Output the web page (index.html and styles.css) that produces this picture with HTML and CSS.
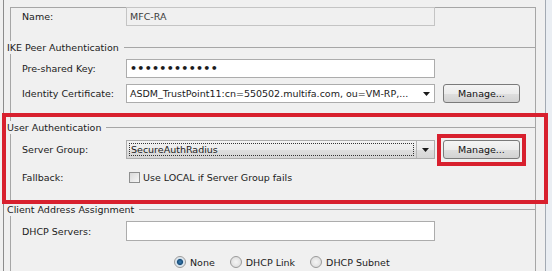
FILE: index.html
```html
<!DOCTYPE html>
<html>
<head>
<meta charset="utf-8">
<link rel="stylesheet" href="styles.css">
</head>
<body>
<div class="screen">
  <div class="main">
    <div class="panel">
      <div class="body body-name">
        <div class="row">
          <span class="label">Name:</span>
          <div class="field field-disabled">MFC-RA</div>
        </div>
      </div>

      <div class="head"><span class="head-text">IKE Peer Authentication</span><span class="head-line"></span></div>
      <div class="body body-ike">
        <div class="row">
          <span class="label">Pre-shared Key:</span>
          <div class="field"><span class="dots">••••••••••••</span></div>
        </div>
        <div class="row">
          <span class="label">Identity Certificate:</span>
          <div class="combo">
            <span class="combo-text">ASDM_TrustPoint11:cn=550502.multifa.com, ou=VM-RP,...</span>
            <span class="combo-arrow"><svg width="7" height="4" viewBox="0 0 7 4"><path d="M0 0H7L3.5 4Z" fill="#1a1a1a"/></svg></span>
          </div>
          <button class="btn">Manage...</button>
        </div>
      </div>

      <div class="head"><span class="head-text">User Authentication</span><span class="head-line"></span></div>
      <div class="body body-user">
        <div class="row">
          <span class="label">Server Group:</span>
          <div class="combo combo-ro">
            <span class="combo-text"><span class="focus">SecureAuthRadius</span></span>
            <span class="combo-arrow"><svg width="7" height="4" viewBox="0 0 7 4"><path d="M0 0H7L3.5 4Z" fill="#1a1a1a"/></svg></span>
          </div>
          <button class="btn">Manage...</button>
        </div>
        <div class="row row-check">
          <span class="label">Fallback:</span>
          <span class="check"></span>
          <span>Use LOCAL if Server Group fails</span>
        </div>
      </div>

      <div class="head"><span class="head-text">Client Address Assignment</span><span class="head-line"></span></div>
      <div class="body body-client">
        <div class="row row-tall">
          <span class="label">DHCP Servers:</span>
          <div class="field field-tall"></div>
        </div>
        <div class="row row-radio">
          <span class="radio radio-on"></span><span class="radio-label">None</span>
          <span class="radio"></span><span class="radio-label">DHCP Link</span>
          <span class="radio"></span><span class="radio-label">DHCP Subnet</span>
        </div>
      </div>
    </div>
  </div>
  <div class="scroll"></div>
  <div class="mark mark-big"></div>
  <div class="mark mark-btn"></div>
</div>
</body>
</html>
```

FILE: styles.css
```css
* { box-sizing: border-box; }
html, body { margin: 0; padding: 0; }
body {
  background: #f0f0f0;
  font-family: "DejaVu Sans", sans-serif;
  font-size: 9.5px;
  color: #1b1b1b;
}
.screen {
  width: 552px;
  height: 271px;
  overflow: hidden;
  display: flex;
  position: relative;
  padding-left: 3px;
}
.main {
  flex: 0 0 542px;
  border-left: 1px solid #8c8c8c;
}
.scroll {
  flex: 1;
  border-left: 1px solid #a3aab3;
  background: #eaeef3;
}
.panel {
  margin: 7px 0 0 6px;
  width: 526px;
  height: 270px;
  border-top: 1px solid #a6a6a6;
  border-right: 1px solid #a6a6a6;
}
.body {
  display: flex;
  flex-direction: column;
  border-left: 1px solid #a6a6a6;
  padding-left: 11px;
}
.body-name { margin-top: -1px; padding-bottom: 15px; }
.body-ike { padding-top: 5px; padding-bottom: 18px; gap: 6px; }
.body-user { padding-top: 6px; padding-bottom: 19px; gap: 12px; }
.body-client { padding-top: 5px; gap: 14px; height: 60px; }

.head {
  display: flex;
  align-items: center;
  height: 13px;
  margin-left: -3px;
}
.head-text { padding-right: 5px; white-space: nowrap; }
.head-line { flex: 1; border-top: 1px solid #a6a6a6; }

.row { display: flex; align-items: center; height: 19px; }
.row-tall { height: 20px; }
.row-check { height: 13px; }
.row-radio { height: 14px; padding-left: 152px; }
.label { width: 104px; flex: none; white-space: nowrap; }

.field {
  width: 309px;
  height: 19px;
  border: 1px solid #acacac;
  background: #fff;
  padding-left: 3px;
  display: flex;
  align-items: center;
}
.field-tall { height: 20px; }
.field-disabled { background: #f0f0f0; border-color: #c4c4c4; color: #3c3c3c; }
.dots { font-size: 11px; font-weight: bold; letter-spacing: 0.3px; }

.combo {
  width: 309px;
  height: 19px;
  border: 1px solid #acacac;
  background: #fff;
  display: flex;
}
.combo-text {
  flex: 1;
  padding-left: 3px;
  display: flex;
  align-items: center;
  white-space: nowrap;
  overflow: hidden;
}
.combo-arrow {
  width: 15px;
  display: flex;
  align-items: center;
  justify-content: center;
}
.combo-ro { background: linear-gradient(#f2f2f2, #ebebeb 50%, #dedede 51%, #d6d6d6); }
.combo-ro .combo-text { padding: 2px 2px 2px 2px; border-right: 1px solid #b5b5b5; }
.combo-ro .combo-arrow { width: 17px; }
.focus {
  flex: 1;
  height: 100%;
  border: 1px dotted #333;
  display: flex;
  align-items: center;
  padding-left: 1px;
}

.btn {
  margin-left: 8px;
  width: 77px;
  height: 19px;
  padding: 0;
  border: 1px solid #7a7a7a;
  border-radius: 3px;
  background: linear-gradient(#f4f4f4, #ececec 50%, #dfdfdf 51%, #d2d2d2);
  font: inherit;
  color: #111;
}

.check {
  width: 11px;
  height: 11px;
  margin-left: 3px;
  margin-right: 3px;
  border: 1px solid #8e8f8f;
  background: linear-gradient(135deg, #d9d9d9, #f7f7f7);
}

.radio {
  width: 12px;
  height: 12px;
  flex: none;
  border-radius: 50%;
  border: 1px solid #9a9a9a;
  background: radial-gradient(circle, #f5f5f5 0, #dcdcdc 6px);
  margin-right: 4px;
}
.radio-on {
  background: radial-gradient(circle, #3b7fb5 0, #1b4f7b 2.6px, #d5e3ee 3.6px, #eeeeee 6px);
}
.radio-label { margin-right: 15px; }

.mark {
  position: absolute;
  border: 4px solid #d8202e;
  pointer-events: none;
}
.mark-big { left: 2px; top: 113px; width: 546px; height: 91px; }
.mark-btn { left: 437px; top: 134px; width: 89px; height: 32px; }
```
